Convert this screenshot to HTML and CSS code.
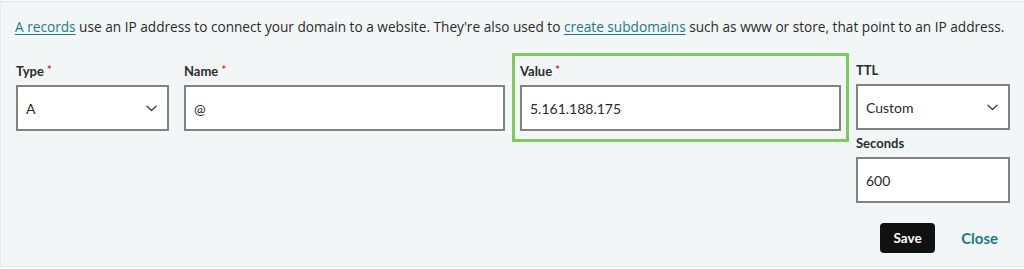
FILE: index.html
```html
<!DOCTYPE html>
<html lang="en">
<head>
<meta charset="utf-8">
<title>A record</title>
<link rel="stylesheet" href="styles.css">
</head>
<body>
<div class="panel">
  <p class="intro"><a href="#" class="link">A records</a> use an IP address to connect your domain to a website. They're also used to <a href="#" class="link">create subdomains</a> such as www or store, that point to an IP address.</p>
  <div class="fields">
    <div class="field">
      <div class="label">Type <span class="req">*</span></div>
      <div class="control select"><span>A</span><svg class="chev" width="11" height="7" viewBox="0 0 11 7"><path d="M1 1.2l4.5 4.3 4.5-4.3" fill="none" stroke="#444" stroke-width="1.4" stroke-linecap="round" stroke-linejoin="round"/></svg></div>
    </div>
    <div class="field">
      <div class="label">Name <span class="req">*</span></div>
      <div class="control"><span>@</span></div>
    </div>
    <div class="field highlight">
      <div class="label">Value <span class="req">*</span></div>
      <div class="control"><span>5.161.188.175</span></div>
    </div>
    <div class="field">
      <div class="label">TTL</div>
      <div class="control select"><span>Custom</span><svg class="chev" width="11" height="7" viewBox="0 0 11 7"><path d="M1 1.2l4.5 4.3 4.5-4.3" fill="none" stroke="#444" stroke-width="1.4" stroke-linecap="round" stroke-linejoin="round"/></svg></div>
      <div class="label sub">Seconds</div>
      <div class="control"><span>600</span></div>
    </div>
  </div>
  <div class="actions">
    <button class="btn-save">Save</button>
    <button class="btn-close">Close</button>
  </div>
</div>
</body>
</html>
```
FILE: styles.css
```css
html, body {
  margin: 0;
  padding: 0;
  background: #ffffff;
}
body {
  padding-top: 1px;
  font-family: Lato, "Noto Sans", "Liberation Sans", sans-serif;
  color: #2b2b2b;
}
.panel {
  box-sizing: border-box;
  height: 266px;
  background: #f3f6f7;
  border-top: 1px solid #e1e5e8;
  border-bottom: 1px solid #e1e5e8;
  border-left: 1px solid #e8ecee;
  padding: 16px 14px 0 14px;
}
.intro {
  margin: 0;
  font-family: "Open Sans", Lato, sans-serif;
  font-size: 13.65px;
  line-height: 18px;
  color: #2a2a2a;
  white-space: nowrap;
}
.link {
  color: #1b7b80;
  text-decoration: underline;
  text-underline-offset: 2px;
}
.fields {
  display: grid;
  grid-template-columns: 153px 321px 321px 154px;
  column-gap: 15px;
  margin-top: 26px;
  margin-left: 1px;
  align-items: start;
}
.field {
  display: flex;
  flex-direction: column;
}
.label {
  font-size: 13px;
  font-weight: 700;
  line-height: 16px;
  margin-bottom: 6px;
  color: #2b2b2b;
}
.label.sub {
  margin-top: 5px;
}
.req {
  color: #e0261b;
  font-size: 11px;
  vertical-align: 2px;
}
.control {
  box-sizing: border-box;
  height: 46px;
  background: #ffffff;
  border: 2px solid #828282;
  display: flex;
  align-items: center;
  justify-content: space-between;
  padding: 0 10px 0 8px;
  font-size: 14px;
  color: #2b2b2b;
}
.chev {
  display: block;
}
.highlight {
  border: 3px solid #7ccb5c;
  padding: 6px 5px 8px 5px;
  margin: -9px -8px -11px -8px;
}
.actions {
  display: flex;
  justify-content: flex-end;
  align-items: center;
  column-gap: 14px;
  margin-top: 20px;
  padding-right: 0;
}
.btn-save {
  box-sizing: border-box;
  width: 55px;
  height: 30px;
  border: none;
  border-radius: 4px;
  background: #111111;
  color: #ffffff;
  font-family: inherit;
  font-size: 13.5px;
  font-weight: 700;
  padding: 0;
}
.btn-close {
  border: none;
  background: transparent;
  color: #1b7b80;
  font-family: inherit;
  font-size: 15px;
  font-weight: 700;
  padding: 0 12px 0 12px;
  height: 30px;
}
```
